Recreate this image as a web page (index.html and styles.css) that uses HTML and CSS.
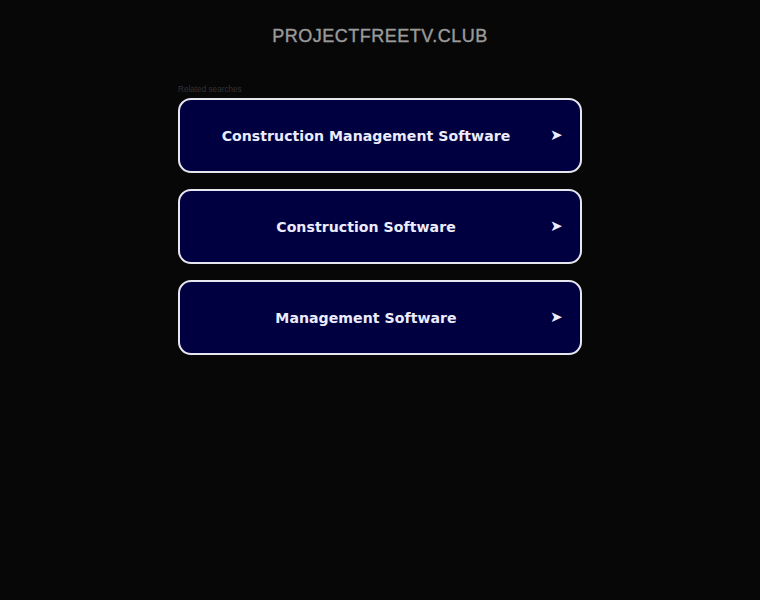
FILE: index.html
```html
<!DOCTYPE html>
<html>
<head>
<meta charset="utf-8">
<link rel="stylesheet" href="styles.css">
</head>
<body>
<div class="page">
  <header class="header">
    <h1 class="domain">PROJECTFREETV.CLUB</h1>
  </header>
  <main class="content">
    <div class="related">Related searches</div>
    <a class="item" href="#"><span class="label">Construction Management Software</span><span class="arrow">➤</span></a>
    <a class="item" href="#"><span class="label">Construction Software</span><span class="arrow">➤</span></a>
    <a class="item" href="#"><span class="label">Management Software</span><span class="arrow">➤</span></a>
  </main>
</div>
</body>
</html>
```
FILE: styles.css
```css
html, body {
  margin: 0;
  padding: 0;
  background: #070707;
  height: 100%;
}
.page {
  display: flex;
  flex-direction: column;
  align-items: center;
}
.header {
  padding-top: 24px;
  height: 55px;
  box-sizing: border-box;
}
.domain {
  margin: 0;
  font-family: "Liberation Sans", Arial, sans-serif;
  font-size: 18px;
  font-weight: normal;
  color: #9a9a9a;
  letter-spacing: 0.5px;
  line-height: 24px;
  -webkit-text-stroke: 0.4px #9a9a9a;
}
.content {
  width: 404px;
  margin-top: 29px;
  display: flex;
  flex-direction: column;
  gap: 16px;
}
.related {
  font-family: "Liberation Sans", Arial, sans-serif;
  font-size: 8.2px;
  color: #333;
  line-height: 11px;
  margin-bottom: -13px;
}
.item {
  display: flex;
  align-items: center;
  height: 75px;
  box-sizing: border-box;
  border: 2px solid #e6e6ee;
  border-radius: 13px;
  background: #000040;
  text-decoration: none;
  padding: 0 18px 0 2px;
}
.label {
  flex: 1;
  text-align: center;
  font-family: "DejaVu Sans", sans-serif;
  font-weight: bold;
  font-size: 14.1px;
  letter-spacing: 0.05px;
  color: #ececff;
}
.arrow {
  width: 12px;
  font-family: "DejaVu Sans", sans-serif;
  font-size: 15px;
  line-height: 15px;
  color: #ececff;
  margin-top: -1px;
}
```
